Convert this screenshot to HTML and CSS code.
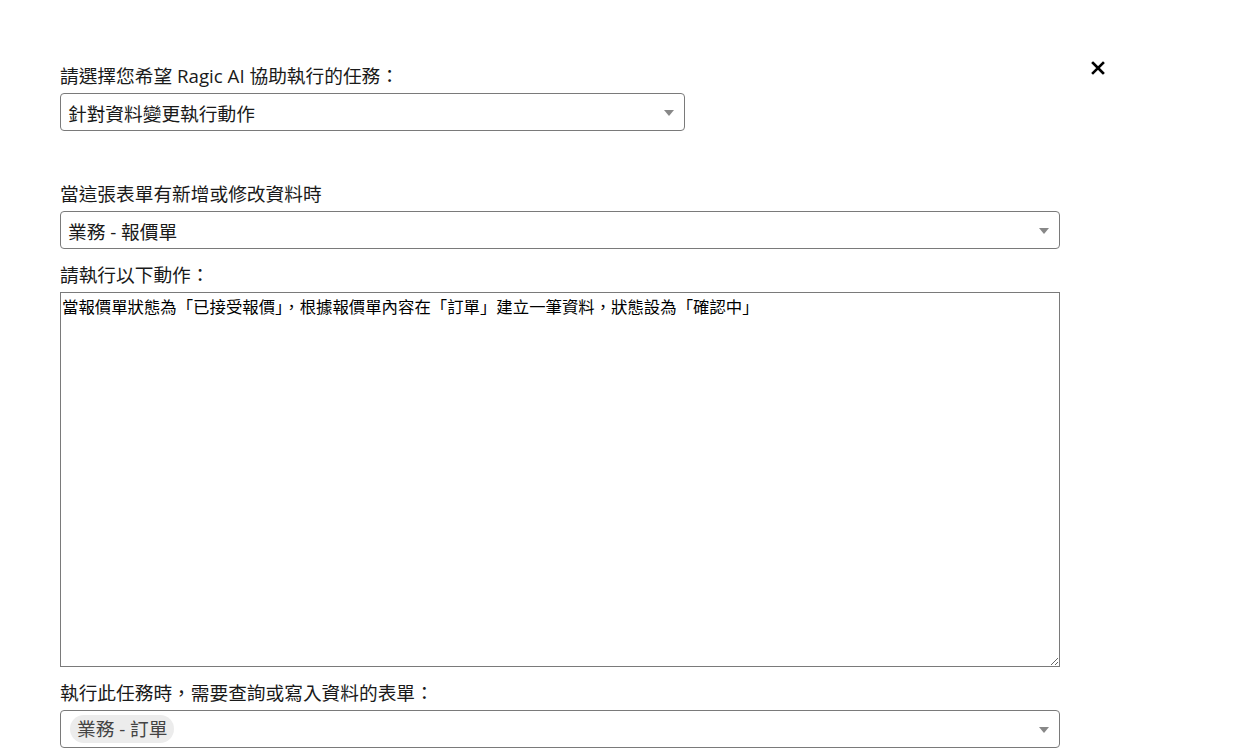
FILE: index.html
```html
<!DOCTYPE html>
<html lang="zh-TW">
<head>
  <meta charset="UTF-8">
  <title>Ragic AI</title>
  <link rel="stylesheet" href="styles.css">
</head>
<body>
  <div class="dialog">
    <!-- 關閉按鈕 -->
    <button class="close-btn" title="關閉">
      <svg width="14" height="14" viewBox="0 0 14 14">
        <path d="M2 2 L12 12 M12 2 L2 12" stroke="#000" stroke-width="2.6" stroke-linecap="square"/>
      </svg>
    </button>

    <div class="field">
      <div class="field-label">請選擇您希望 Ragic AI 協助執行的任務：</div>
      <div class="select select-short">
        <span class="select-value">針對資料變更執行動作</span>
        <span class="select-arrow"></span>
      </div>
    </div>

    <div class="field field-spaced">
      <div class="field-label">當這張表單有新增或修改資料時</div>
      <div class="select">
        <span class="select-value">業務 - 報價單</span>
        <span class="select-arrow"></span>
      </div>
    </div>

    <div class="field">
      <div class="field-label">請執行以下動作：</div>
      <textarea class="action-text" readonly>當報價單狀態為「已接受報價」，根據報價單內容在「訂單」建立一筆資料，狀態設為「確認中」</textarea>
    </div>

    <div class="field">
      <div class="field-label">執行此任務時，需要查詢或寫入資料的表單：</div>
      <div class="select select-tags">
        <span class="tag">業務 - 訂單</span>
        <span class="select-arrow"></span>
      </div>
    </div>
  </div>
</body>
</html>
```

FILE: styles.css
```css
* {
  margin: 0;
  padding: 0;
  box-sizing: border-box;
}

body {
  width: 1237px;
  height: 755px;
  background: #fff;
  overflow: hidden;
  font-family: "Open Sans", "Noto Sans CJK TC", sans-serif;
  color: #1a1a1a;
}

.dialog {
  position: relative;
  padding: 64px 0 0 60px;
  width: 1060px;
}

.close-btn {
  position: absolute;
  top: 60px;
  left: 1090px;
  width: 16px;
  height: 16px;
  border: none;
  background: transparent;
  display: flex;
  align-items: center;
  justify-content: center;
  cursor: pointer;
}

.field {
  display: flex;
  flex-direction: column;
  margin-bottom: 14px;
}

/* 與上一欄的間距（外距會合併） */
.field-spaced {
  margin-top: 51px;
}

.field-label {
  font-size: 18.7px;
  line-height: 24px;
  margin-bottom: 5px;
}

.select {
  height: 38px;
  width: 1000px;
  border: 1px solid #7a7a7a;
  border-radius: 4px;
  display: flex;
  align-items: center;
  justify-content: space-between;
  padding: 0 10px 0 7px;
  font-size: 18.7px;
}

.select-short {
  width: 625px;
}

.select-arrow {
  width: 0;
  height: 0;
  border-left: 5px solid transparent;
  border-right: 5px solid transparent;
  border-top: 6px solid #888;
  margin-top: 2px;
}

.select-tags {
  padding-left: 9px;
}

.tag {
  background: #ececec;
  color: #444;
  border-radius: 14px;
  font-size: 18.7px;
  line-height: 28px;
  padding: 0 7px;
}

.action-text {
  width: 1000px;
  height: 375px;
  border: 1px solid #7a7a7a;
  padding: 2px 1px;
  font-family: "Open Sans", "Noto Sans CJK TC", sans-serif;
  font-size: 16.4px;
  line-height: 24px;
  color: #000;
  resize: vertical;
  outline: none;
}
```
